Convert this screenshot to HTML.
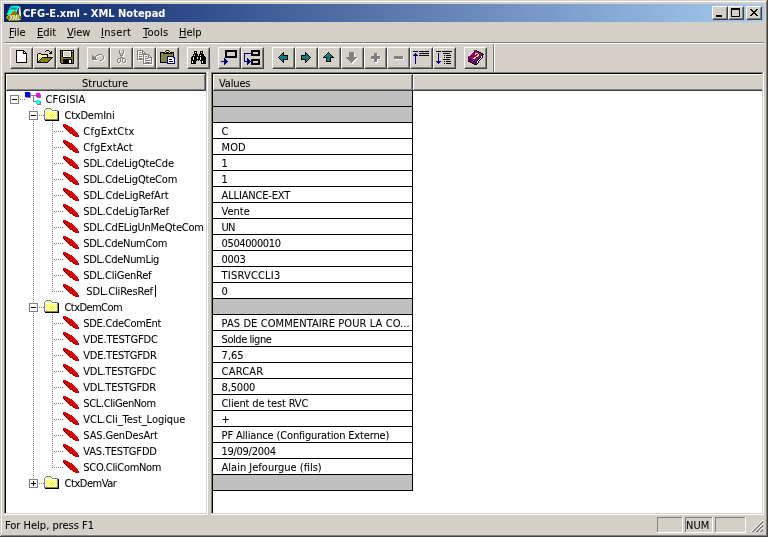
<!DOCTYPE html><html><head><meta charset="utf-8"><title>CFG-E.xml - XML Notepad</title><style>
html,body{margin:0;padding:0;background:#d4d0c8;}
body{width:768px;height:537px;overflow:hidden;position:relative;font-family:"DejaVu Sans Condensed","Liberation Sans",sans-serif;font-size:11px;color:#000;}
#win{will-change:transform;position:absolute;left:0;top:0;width:768px;height:537px;background:#d4d0c8;overflow:hidden;}
#win div,#win svg{position:absolute;}
.t{white-space:pre;line-height:16px;height:16px;-webkit-text-stroke:0.06px #000;}
.tb{white-space:pre;line-height:18px;height:18px;font-weight:bold;color:#fff;}
.btn{width:23px;height:22px;background:#d4d0c8;box-sizing:border-box;border:1px solid;border-color:#fff #404040 #404040 #fff;}
.btn:after{content:"";position:absolute;left:0;top:0;right:0;bottom:0;border:1px solid;border-color:#d4d0c8 #808080 #808080 #d4d0c8;}
u{text-decoration:underline;text-decoration-thickness:1px;text-underline-offset:1px;}
</style></head><body><div id="win">
<div style="left:0px;top:0px;width:768px;height:537px;background:#d4d0c8;"></div>
<div style="left:1px;top:1px;width:766px;height:1px;background:#ffffff;"></div>
<div style="left:1px;top:1px;width:1px;height:534px;background:#ffffff;"></div>
<div style="left:766px;top:1px;width:1px;height:535px;background:#808080;"></div>
<div style="left:1px;top:535px;width:766px;height:1px;background:#808080;"></div>
<div style="left:767px;top:0px;width:1px;height:537px;background:#404040;"></div>
<div style="left:0px;top:536px;width:768px;height:1px;background:#404040;"></div>
<div style="left:4px;top:4px;width:760px;height:18px;background:linear-gradient(to right,#0a246a,#a6caf0);"></div>
<div class="tb" style="left:23px;top:5px;">CFG-E.xml - XML Notepad</div>
<svg style="left:6px;top:5px" width="16" height="16" viewBox="0 0 16 16">
<polygon points="12.6,1.6 14.6,1.2 15.8,13 13,13" fill="#e8e8e8"/>
<polygon points="14.6,1.2 15.2,1.2 16,13.4 15.2,13.4" fill="#000"/>
<polygon points="4.6,0.6 14,0.6 9.6,10.6 0,10.6" fill="#00ffff"/>
<polygon points="4.6,0.6 14,0.6 9.6,10.6 0,10.6" fill="none" stroke="#000" stroke-width="1" stroke-dasharray="1 1"/>
<polygon points="5,2.6 11.6,2.6 10.6,4.4 4.4,4.4" fill="#008080"/>
<polygon points="8,5 16,12.6 12.4,16 3.8,16 0,12.6" fill="#808000"/>
<path d="M8 5.2 L0.4 12.6 L4 15.8" stroke="#ffff00" stroke-width="1" fill="none" stroke-dasharray="1.4 0.6"/>
<text x="3.6" y="14.9" font-family="Liberation Sans, sans-serif" font-weight="bold" font-size="7" fill="#fff" textLength="11" lengthAdjust="spacingAndGlyphs">XML</text>
</svg>
<div style="left:712px;top:6px;width:16px;height:14px;background:#d4d0c8;box-sizing:border-box;border:1px solid;border-color:#fff #404040 #404040 #fff;"><div style="left:0;top:0;right:0;bottom:0;border:1px solid;border-color:#d4d0c8 #808080 #808080 #d4d0c8;"></div></div>
<div style="left:728px;top:6px;width:16px;height:14px;background:#d4d0c8;box-sizing:border-box;border:1px solid;border-color:#fff #404040 #404040 #fff;"><div style="left:0;top:0;right:0;bottom:0;border:1px solid;border-color:#d4d0c8 #808080 #808080 #d4d0c8;"></div></div>
<div style="left:746px;top:6px;width:16px;height:14px;background:#d4d0c8;box-sizing:border-box;border:1px solid;border-color:#fff #404040 #404040 #fff;"><div style="left:0;top:0;right:0;bottom:0;border:1px solid;border-color:#d4d0c8 #808080 #808080 #d4d0c8;"></div></div>
<div style="left:716px;top:15px;width:6px;height:2px;background:#000000;"></div>
<div style="left:731px;top:8px;width:9px;height:9px;background:transparent;box-sizing:border-box;border:1px solid #000;border-top:2px solid #000;"></div>
<svg style="left:750px;top:9px" width="8" height="7" viewBox="0 0 8 7" shape-rendering="crispEdges"><path d="M0 0h2v1h1v1h2v-1h1v-1h2v1h-1v1h-1v1h-1v1h1v1h1v1h1v1h-2v-1h-1v-1h-2v1h-1v1h-2v-1h1v-1h1v-1h1v-1h-1v-1h-1v-1h-1z" fill="#000"/></svg>
<div class="t" style="left:9px;top:25px;"><u>F</u>ile</div>
<div class="t" style="left:37px;top:25px;"><u>E</u>dit</div>
<div class="t" style="left:67px;top:25px;"><u>V</u>iew</div>
<div class="t" style="left:101px;top:25px;letter-spacing:0.3px;"><u>I</u>nsert</div>
<div class="t" style="left:143px;top:25px;letter-spacing:0.25px;"><u>T</u>ools</div>
<div class="t" style="left:179px;top:25px;"><u>H</u>elp</div>
<div style="left:4px;top:42px;width:760px;height:1px;background:#808080;"></div>
<div style="left:4px;top:43px;width:760px;height:1px;background:#ffffff;"></div>
<div class="btn" style="left:10px;top:47px"></div>
<div class="btn" style="left:33px;top:47px"></div>
<div class="btn" style="left:56px;top:47px"></div>
<div class="btn" style="left:87px;top:47px"></div>
<div class="btn" style="left:110px;top:47px"></div>
<div class="btn" style="left:133px;top:47px"></div>
<div class="btn" style="left:156px;top:47px"></div>
<div class="btn" style="left:187px;top:47px"></div>
<div class="btn" style="left:218px;top:47px"></div>
<div class="btn" style="left:241px;top:47px"></div>
<div class="btn" style="left:272px;top:47px"></div>
<div class="btn" style="left:295px;top:47px"></div>
<div class="btn" style="left:318px;top:47px"></div>
<div class="btn" style="left:341px;top:47px"></div>
<div class="btn" style="left:364px;top:47px"></div>
<div class="btn" style="left:387px;top:47px"></div>
<div class="btn" style="left:410px;top:47px"></div>
<div class="btn" style="left:433px;top:47px"></div>
<div class="btn" style="left:464px;top:47px"></div>
<div style="left:493px;top:44px;width:1px;height:28px;background:#808080;"></div>
<div style="left:494px;top:44px;width:1px;height:28px;background:#ffffff;"></div>
<svg style="left:16px;top:50px" width="11" height="13" viewBox="0 0 11 13" shape-rendering="crispEdges"><path fill="#000000" d="M0 0h8v1h-8zM0 1h1v1h-1zM7 1h2v1h-2zM0 2h1v1h-1zM7 2h1v1h-1zM9 2h1v1h-1zM0 3h1v1h-1zM7 3h4v1h-4zM0 4h1v1h-1zM10 4h1v1h-1zM0 5h1v1h-1zM10 5h1v1h-1zM0 6h1v1h-1zM10 6h1v1h-1zM0 7h1v1h-1zM10 7h1v1h-1zM0 8h1v1h-1zM10 8h1v1h-1zM0 9h1v1h-1zM10 9h1v1h-1zM0 10h1v1h-1zM10 10h1v1h-1zM0 11h1v1h-1zM10 11h1v1h-1zM0 12h11v1h-11z"/><path fill="#ffffff" d="M1 1h6v1h-6zM1 2h6v1h-6zM8 2h1v1h-1zM1 3h6v1h-6zM1 4h9v1h-9zM1 5h9v1h-9zM1 6h9v1h-9zM1 7h9v1h-9zM1 8h9v1h-9zM1 9h9v1h-9zM1 10h9v1h-9zM1 11h9v1h-9z"/></svg>
<svg style="left:37px;top:50px" width="16" height="13" viewBox="0 0 16 13" shape-rendering="crispEdges"><path fill="#000000" d="M9 0h3v1h-3zM8 1h1v1h-1zM12 1h1v1h-1zM14 1h1v1h-1zM13 2h2v1h-2zM1 3h3v1h-3zM12 3h3v1h-3zM0 4h1v1h-1zM4 4h7v1h-7zM0 5h1v1h-1zM10 5h1v1h-1zM0 6h1v1h-1zM10 6h1v1h-1zM0 7h1v1h-1zM5 7h11v1h-11zM0 8h1v1h-1zM4 8h1v1h-1zM14 8h1v1h-1zM0 9h1v1h-1zM3 9h1v1h-1zM13 9h1v1h-1zM0 10h1v1h-1zM2 10h1v1h-1zM12 10h1v1h-1zM0 11h2v1h-2zM11 11h1v1h-1zM0 12h11v1h-11z"/><path fill="#ffffff" d="M1 4h1v1h-1zM3 4h1v1h-1zM2 5h1v1h-1zM4 5h1v1h-1zM6 5h1v1h-1zM8 5h1v1h-1zM1 6h1v1h-1zM3 6h1v1h-1zM5 6h1v1h-1zM7 6h1v1h-1zM9 6h1v1h-1zM2 7h1v1h-1zM4 7h1v1h-1zM1 8h1v1h-1zM3 8h1v1h-1zM2 9h1v1h-1zM1 10h1v1h-1z"/><path fill="#ffff00" d="M2 4h1v1h-1zM1 5h1v1h-1zM3 5h1v1h-1zM5 5h1v1h-1zM7 5h1v1h-1zM9 5h1v1h-1zM2 6h1v1h-1zM4 6h1v1h-1zM6 6h1v1h-1zM8 6h1v1h-1zM1 7h1v1h-1zM3 7h1v1h-1zM2 8h1v1h-1zM1 9h1v1h-1z"/><path fill="#808000" d="M5 8h9v1h-9zM4 9h9v1h-9zM3 10h9v1h-9zM2 11h9v1h-9z"/></svg>
<svg style="left:60px;top:50px" width="14" height="14" viewBox="0 0 14 14" shape-rendering="crispEdges"><path fill="#000000" d="M0 0h14v1h-14zM0 1h1v1h-1zM2 1h1v1h-1zM11 1h1v1h-1zM13 1h1v1h-1zM0 2h1v1h-1zM2 2h1v1h-1zM11 2h3v1h-3zM0 3h1v1h-1zM2 3h1v1h-1zM11 3h1v1h-1zM13 3h1v1h-1zM0 4h1v1h-1zM2 4h1v1h-1zM11 4h1v1h-1zM13 4h1v1h-1zM0 5h1v1h-1zM2 5h1v1h-1zM11 5h1v1h-1zM13 5h1v1h-1zM0 6h1v1h-1zM2 6h1v1h-1zM11 6h1v1h-1zM13 6h1v1h-1zM0 7h1v1h-1zM3 7h8v1h-8zM13 7h1v1h-1zM0 8h1v1h-1zM13 8h1v1h-1zM0 9h1v1h-1zM3 9h9v1h-9zM13 9h1v1h-1zM0 10h1v1h-1zM3 10h6v1h-6zM11 10h1v1h-1zM13 10h1v1h-1zM0 11h1v1h-1zM3 11h6v1h-6zM11 11h1v1h-1zM13 11h1v1h-1zM0 12h1v1h-1zM3 12h6v1h-6zM11 12h1v1h-1zM13 12h1v1h-1zM1 13h13v1h-13z"/><path fill="#808000" d="M1 1h1v1h-1zM1 2h1v1h-1zM1 3h1v1h-1zM12 3h1v1h-1zM1 4h1v1h-1zM12 4h1v1h-1zM1 5h1v1h-1zM12 5h1v1h-1zM1 6h1v1h-1zM12 6h1v1h-1zM1 7h2v1h-2zM11 7h2v1h-2zM1 8h12v1h-12zM1 9h2v1h-2zM12 9h1v1h-1zM1 10h2v1h-2zM12 10h1v1h-1zM1 11h2v1h-2zM12 11h1v1h-1zM1 12h2v1h-2zM12 12h1v1h-1z"/><path fill="#ffffff" d="M3 1h8v1h-8zM12 1h1v1h-1zM3 2h1v1h-1zM10 2h1v1h-1zM3 3h1v1h-1zM10 3h1v1h-1zM3 4h1v1h-1zM10 4h1v1h-1zM3 5h1v1h-1zM10 5h1v1h-1zM3 6h8v1h-8zM9 10h2v1h-2zM9 11h2v1h-2zM9 12h2v1h-2z"/><path fill="#d4d0c8" d="M4 2h6v1h-6zM4 3h6v1h-6zM4 4h6v1h-6zM4 5h6v1h-6z"/></svg>
<svg style="left:92px;top:54px" width="17" height="8" viewBox="0 0 17 8" shape-rendering="crispEdges"><path fill="#808080" d="M6 0h4v1h-4zM0 1h1v1h-1zM4 1h2v1h-2zM10 1h1v1h-1zM0 2h2v1h-2zM3 2h1v1h-1zM11 2h1v1h-1zM0 3h4v1h-4zM11 3h1v1h-1zM0 4h4v1h-4zM11 4h1v1h-1zM0 5h5v1h-5zM10 5h1v1h-1zM8 6h2v1h-2z"/><path fill="#ffffff" d="M7 1h3v1h-3zM5 2h2v1h-2zM4 3h1v1h-1zM12 3h1v1h-1zM4 4h1v1h-1zM12 4h1v1h-1zM12 5h1v1h-1zM1 6h5v1h-5zM11 6h1v1h-1zM9 7h2v1h-2z"/></svg>
<svg style="left:117px;top:50px" width="11" height="14" viewBox="0 0 11 14" shape-rendering="crispEdges"><path fill="#808080" d="M2 0h1v1h-1zM6 0h1v1h-1zM2 1h1v1h-1zM6 1h1v1h-1zM2 2h1v1h-1zM6 2h1v1h-1zM2 3h2v1h-2zM5 3h2v1h-2zM3 4h1v1h-1zM5 4h1v1h-1zM3 5h3v1h-3zM4 6h1v1h-1zM3 7h3v1h-3zM1 8h3v1h-3zM5 8h3v1h-3zM0 9h1v1h-1zM3 9h1v1h-1zM5 9h1v1h-1zM8 9h1v1h-1zM0 10h1v1h-1zM3 10h1v1h-1zM5 10h1v1h-1zM8 10h1v1h-1zM0 11h1v1h-1zM3 11h1v1h-1zM5 11h1v1h-1zM8 11h1v1h-1zM1 12h2v1h-2zM6 12h2v1h-2z"/><path fill="#ffffff" d="M3 1h1v1h-1zM7 1h1v1h-1zM3 2h1v1h-1zM7 2h1v1h-1zM7 3h1v1h-1zM4 4h1v1h-1zM6 4h2v1h-2zM6 5h1v1h-1zM5 6h2v1h-2zM4 8h1v1h-1zM2 9h1v1h-1zM4 9h1v1h-1zM6 9h2v1h-2zM1 10h1v1h-1zM4 10h1v1h-1zM6 10h1v1h-1zM9 10h1v1h-1zM1 11h1v1h-1zM4 11h1v1h-1zM6 11h1v1h-1zM9 11h1v1h-1zM4 12h1v1h-1zM9 12h1v1h-1zM2 13h2v1h-2zM7 13h2v1h-2z"/></svg>
<svg style="left:137px;top:50px" width="17" height="15" viewBox="0 0 17 15" shape-rendering="crispEdges"><path fill="#808080" d="M0 0h6v1h-6zM0 1h1v1h-1zM5 1h2v1h-2zM0 2h1v1h-1zM2 2h2v1h-2zM5 2h1v1h-1zM7 2h1v1h-1zM0 3h1v1h-1zM5 3h4v1h-4zM0 4h1v1h-1zM2 4h3v1h-3zM6 4h6v1h-6zM0 5h1v1h-1zM6 5h1v1h-1zM11 5h2v1h-2zM0 6h1v1h-1zM2 6h3v1h-3zM6 6h1v1h-1zM8 6h2v1h-2zM11 6h1v1h-1zM13 6h1v1h-1zM0 7h1v1h-1zM6 7h1v1h-1zM11 7h4v1h-4zM0 8h1v1h-1zM2 8h3v1h-3zM6 8h1v1h-1zM8 8h3v1h-3zM14 8h1v1h-1zM0 9h7v1h-7zM14 9h1v1h-1zM6 10h1v1h-1zM8 10h5v1h-5zM14 10h1v1h-1zM6 11h1v1h-1zM14 11h1v1h-1zM6 12h1v1h-1zM8 12h5v1h-5zM14 12h1v1h-1zM6 13h9v1h-9z"/><path fill="#ffffff" d="M1 1h4v1h-4zM1 2h1v1h-1zM6 2h1v1h-1zM1 3h1v1h-1zM3 3h2v1h-2zM1 4h1v1h-1zM1 5h1v1h-1zM3 5h3v1h-3zM7 5h4v1h-4zM1 6h1v1h-1zM7 6h1v1h-1zM12 6h1v1h-1zM1 7h1v1h-1zM3 7h3v1h-3zM7 7h1v1h-1zM9 7h2v1h-2zM1 8h1v1h-1zM7 8h1v1h-1zM12 8h2v1h-2zM15 8h1v1h-1zM7 9h1v1h-1zM9 9h3v1h-3zM15 9h1v1h-1zM1 10h5v1h-5zM7 10h1v1h-1zM15 10h1v1h-1zM7 11h1v1h-1zM9 11h5v1h-5zM15 11h1v1h-1zM7 12h1v1h-1zM15 12h1v1h-1zM15 13h1v1h-1zM7 14h9v1h-9z"/></svg>
<svg style="left:160px;top:50px" width="15" height="14" viewBox="0 0 15 14" shape-rendering="crispEdges"><path fill="#000000" d="M6 0h3v1h-3zM5 1h1v1h-1zM9 1h1v1h-1zM0 2h5v1h-5zM6 2h3v1h-3zM10 2h4v1h-4zM0 3h1v1h-1zM3 3h9v1h-9zM13 3h1v1h-1zM0 4h1v1h-1zM13 4h1v1h-1zM0 5h1v1h-1zM13 5h1v1h-1zM0 6h1v1h-1zM0 7h1v1h-1zM0 8h1v1h-1zM0 9h1v1h-1zM0 10h1v1h-1zM0 11h1v1h-1zM0 12h7v1h-7z"/><path fill="#ffff00" d="M6 1h3v1h-3zM5 2h1v1h-1zM9 2h1v1h-1z"/><path fill="#848444" d="M1 3h2v1h-2zM12 3h1v1h-1zM1 4h12v1h-12zM1 5h12v1h-12zM1 6h6v1h-6zM1 7h6v1h-6zM1 8h6v1h-6zM1 9h6v1h-6zM1 10h6v1h-6zM1 11h6v1h-6z"/><path fill="#000080" d="M7 6h7v1h-7zM7 7h1v1h-1zM13 7h2v1h-2zM7 8h1v1h-1zM14 8h1v1h-1zM7 9h1v1h-1zM9 9h3v1h-3zM14 9h1v1h-1zM7 10h1v1h-1zM14 10h1v1h-1zM7 11h1v1h-1zM9 11h4v1h-4zM14 11h1v1h-1zM7 12h1v1h-1zM14 12h1v1h-1zM7 13h8v1h-8z"/><path fill="#ffffff" d="M8 7h5v1h-5zM8 8h6v1h-6zM8 9h1v1h-1zM12 9h2v1h-2zM8 10h6v1h-6zM8 11h1v1h-1zM13 11h1v1h-1zM8 12h6v1h-6z"/></svg>
<svg style="left:191px;top:51px" width="15" height="13" viewBox="0 0 15 13" shape-rendering="crispEdges"><path fill="#000000" d="M3 0h3v1h-3zM9 0h3v1h-3zM3 1h1v1h-1zM5 1h1v1h-1zM9 1h1v1h-1zM11 1h1v1h-1zM3 2h3v1h-3zM9 2h3v1h-3zM2 3h5v1h-5zM8 3h5v1h-5zM2 4h1v1h-1zM4 4h3v1h-3zM8 4h1v1h-1zM10 4h3v1h-3zM1 5h13v1h-13zM0 6h2v1h-2zM3 6h3v1h-3zM7 6h2v1h-2zM10 6h5v1h-5zM0 7h2v1h-2zM3 7h3v1h-3zM7 7h2v1h-2zM10 7h5v1h-5zM0 8h2v1h-2zM3 8h6v1h-6zM10 8h5v1h-5zM0 9h6v1h-6zM7 9h1v1h-1zM9 9h6v1h-6zM0 10h1v1h-1zM2 10h3v1h-3zM10 10h1v1h-1zM12 10h3v1h-3zM0 11h1v1h-1zM2 11h3v1h-3zM10 11h1v1h-1zM12 11h3v1h-3zM0 12h5v1h-5zM10 12h5v1h-5z"/><path fill="#ffffff" d="M4 1h1v1h-1zM10 1h1v1h-1zM3 4h1v1h-1zM9 4h1v1h-1zM2 6h1v1h-1zM6 6h1v1h-1zM9 6h1v1h-1zM2 7h1v1h-1zM6 7h1v1h-1zM9 7h1v1h-1zM2 8h1v1h-1zM9 8h1v1h-1zM1 10h1v1h-1zM11 10h1v1h-1zM1 11h1v1h-1zM11 11h1v1h-1z"/></svg>
<svg style="left:221px;top:50px" width="16" height="15" viewBox="0 0 16 15" shape-rendering="crispEdges"><path fill="#000000" d="M4 0h12v1h-12zM4 1h12v1h-12zM4 2h2v1h-2zM14 2h2v1h-2zM4 3h2v1h-2zM14 3h2v1h-2zM4 4h2v1h-2zM14 4h2v1h-2zM4 5h2v1h-2zM14 5h2v1h-2zM4 6h12v1h-12zM4 7h12v1h-12z"/><path fill="#000080" d="M3 8h1v1h-1zM3 9h2v1h-2zM3 10h3v1h-3zM0 11h7v1h-7zM3 12h3v1h-3zM3 13h2v1h-2zM3 14h1v1h-1z"/></svg>
<svg style="left:244px;top:50px" width="16" height="15" viewBox="0 0 16 15" shape-rendering="crispEdges"><path fill="#000000" d="M7 0h9v1h-9zM7 1h9v1h-9zM7 2h2v1h-2zM14 2h2v1h-2zM7 3h2v1h-2zM14 3h2v1h-2zM7 4h9v1h-9zM7 5h9v1h-9zM7 9h9v1h-9zM7 10h9v1h-9zM7 11h2v1h-2zM14 11h2v1h-2zM7 12h2v1h-2zM14 12h2v1h-2zM7 13h9v1h-9zM7 14h9v1h-9z"/><path fill="#000080" d="M0 3h7v1h-7zM0 4h1v1h-1zM0 5h1v1h-1zM0 6h1v1h-1zM0 7h1v1h-1zM0 8h1v1h-1zM3 8h1v1h-1zM0 9h1v1h-1zM3 9h2v1h-2zM0 10h1v1h-1zM3 10h3v1h-3zM0 11h7v1h-7zM3 12h3v1h-3zM3 13h2v1h-2zM3 14h1v1h-1z"/></svg>
<svg style="left:278px;top:52px" width="10" height="11" viewBox="0 0 10 11" shape-rendering="crispEdges"><path fill="#000000" d="M5 0h1v1h-1zM4 1h2v1h-2zM3 2h1v1h-1zM5 2h1v1h-1zM2 3h1v1h-1zM5 3h5v1h-5zM1 4h1v1h-1zM9 4h1v1h-1zM0 5h1v1h-1zM9 5h1v1h-1zM1 6h1v1h-1zM9 6h1v1h-1zM2 7h1v1h-1zM5 7h5v1h-5zM3 8h1v1h-1zM5 8h1v1h-1zM4 9h2v1h-2zM5 10h1v1h-1z"/><path fill="#008080" d="M4 2h1v1h-1zM3 3h2v1h-2zM2 4h7v1h-7zM1 5h8v1h-8zM2 6h7v1h-7zM3 7h2v1h-2zM4 8h1v1h-1z"/></svg>
<svg style="left:301px;top:52px" width="10" height="11" viewBox="0 0 10 11" shape-rendering="crispEdges"><path fill="#000000" d="M4 0h1v1h-1zM4 1h2v1h-2zM4 2h1v1h-1zM6 2h1v1h-1zM0 3h5v1h-5zM7 3h1v1h-1zM0 4h1v1h-1zM8 4h1v1h-1zM0 5h1v1h-1zM9 5h1v1h-1zM0 6h1v1h-1zM8 6h1v1h-1zM0 7h5v1h-5zM7 7h1v1h-1zM4 8h1v1h-1zM6 8h1v1h-1zM4 9h2v1h-2zM4 10h1v1h-1z"/><path fill="#008080" d="M5 2h1v1h-1zM5 3h2v1h-2zM1 4h7v1h-7zM1 5h8v1h-8zM1 6h7v1h-7zM5 7h2v1h-2zM5 8h1v1h-1z"/></svg>
<svg style="left:323px;top:52px" width="11" height="10" viewBox="0 0 11 10" shape-rendering="crispEdges"><path fill="#000000" d="M5 0h1v1h-1zM4 1h1v1h-1zM6 1h1v1h-1zM3 2h1v1h-1zM7 2h1v1h-1zM2 3h1v1h-1zM8 3h1v1h-1zM1 4h1v1h-1zM9 4h1v1h-1zM0 5h4v1h-4zM7 5h4v1h-4zM3 6h1v1h-1zM7 6h1v1h-1zM3 7h1v1h-1zM7 7h1v1h-1zM3 8h1v1h-1zM7 8h1v1h-1zM3 9h5v1h-5z"/><path fill="#008080" d="M5 1h1v1h-1zM4 2h3v1h-3zM3 3h5v1h-5zM2 4h7v1h-7zM4 5h3v1h-3zM4 6h3v1h-3zM4 7h3v1h-3zM4 8h3v1h-3z"/></svg>
<svg style="left:346px;top:52px" width="13" height="12" viewBox="0 0 13 12" shape-rendering="crispEdges"><path fill="#808080" d="M3 0h5v1h-5zM3 1h5v1h-5zM3 2h5v1h-5zM3 3h5v1h-5zM3 4h5v1h-5zM0 5h11v1h-11zM1 6h9v1h-9zM2 7h7v1h-7zM3 8h5v1h-5zM4 9h3v1h-3zM5 10h1v1h-1z"/><path fill="#ffffff" d="M8 1h1v1h-1zM8 2h1v1h-1zM8 3h1v1h-1zM8 4h1v1h-1zM10 6h2v1h-2zM9 7h2v1h-2zM8 8h2v1h-2zM7 9h2v1h-2zM6 10h2v1h-2zM6 11h1v1h-1z"/></svg>
<svg style="left:371px;top:53px" width="11" height="10" viewBox="0 0 11 10" shape-rendering="crispEdges"><path fill="#808080" d="M3 0h3v1h-3zM3 1h3v1h-3zM3 2h3v1h-3zM0 3h9v1h-9zM0 4h9v1h-9zM0 5h9v1h-9zM3 6h3v1h-3zM3 7h3v1h-3zM3 8h3v1h-3z"/><path fill="#ffffff" d="M6 1h1v1h-1zM6 2h1v1h-1zM9 4h1v1h-1zM9 5h1v1h-1zM1 6h2v1h-2zM6 6h4v1h-4zM6 7h1v1h-1zM6 8h1v1h-1zM4 9h3v1h-3z"/></svg>
<svg style="left:394px;top:56px" width="11" height="4" viewBox="0 0 11 4" shape-rendering="crispEdges"><path fill="#808080" d="M0 0h9v1h-9zM0 1h9v1h-9zM0 2h9v1h-9z"/><path fill="#ffffff" d="M9 1h1v1h-1zM9 2h1v1h-1zM1 3h9v1h-9z"/></svg>
<svg style="left:413px;top:51px" width="16" height="13" viewBox="0 0 16 13" shape-rendering="crispEdges"><path fill="#000000" d="M0 0h5v1h-5zM6 0h10v1h-10zM6 2h10v1h-10zM6 4h10v1h-10z"/><path fill="#000080" d="M2 2h1v1h-1zM1 3h3v1h-3zM0 4h5v1h-5zM2 5h1v1h-1zM2 6h1v1h-1zM2 7h1v1h-1zM2 8h1v1h-1zM2 9h1v1h-1zM2 10h1v1h-1zM2 11h1v1h-1zM2 12h1v1h-1z"/></svg>
<svg style="left:436px;top:51px" width="16" height="13" viewBox="0 0 16 13" shape-rendering="crispEdges"><path fill="#000000" d="M0 0h5v1h-5zM6 0h10v1h-10zM7 2h7v1h-7zM8 4h1v1h-1zM10 4h5v1h-5zM8 6h1v1h-1zM10 6h5v1h-5zM7 8h7v1h-7zM8 10h1v1h-1zM10 10h5v1h-5zM8 12h1v1h-1zM10 12h5v1h-5z"/><path fill="#000080" d="M2 2h1v1h-1zM2 3h1v1h-1zM2 4h1v1h-1zM2 5h1v1h-1zM2 6h1v1h-1zM2 7h1v1h-1zM2 8h1v1h-1zM2 9h1v1h-1zM0 10h5v1h-5zM1 11h3v1h-3zM2 12h1v1h-1z"/></svg>
<svg style="left:468px;top:50px" width="16" height="15" viewBox="0 0 16 15" shape-rendering="crispEdges"><path fill="#880088" d="M6 0h2v1h-2zM6 1h3v1h-3zM5 2h6v1h-6zM4 3h3v1h-3zM10 3h3v1h-3zM3 4h4v1h-4zM8 4h2v1h-2zM11 4h3v1h-3zM2 5h7v1h-7zM11 5h3v1h-3zM0 6h8v1h-8zM10 6h3v1h-3zM1 7h5v1h-5zM8 7h4v1h-4zM1 8h4v1h-4zM7 8h4v1h-4zM0 9h1v1h-1zM3 9h7v1h-7zM0 10h3v1h-3zM5 10h4v1h-4zM2 11h3v1h-3zM7 11h1v1h-1zM4 12h3v1h-3zM6 13h3v1h-3z"/><path fill="#000000" d="M8 0h1v1h-1zM9 1h2v1h-2zM11 2h2v1h-2zM13 3h2v1h-2zM14 4h2v1h-2zM14 5h1v1h-1zM14 6h1v1h-1zM0 7h1v1h-1zM12 7h1v1h-1zM14 7h1v1h-1zM0 8h1v1h-1zM11 8h1v1h-1zM13 8h1v1h-1zM1 9h2v1h-2zM10 9h1v1h-1zM12 9h1v1h-1zM3 10h2v1h-2zM9 10h1v1h-1zM11 10h1v1h-1zM0 11h2v1h-2zM5 11h2v1h-2zM8 11h1v1h-1zM10 11h1v1h-1zM2 12h2v1h-2zM7 12h2v1h-2zM10 12h1v1h-1zM4 13h2v1h-2zM9 13h1v1h-1zM6 14h3v1h-3z"/><path fill="#ffffff" d="M5 1h1v1h-1zM4 2h1v1h-1zM3 3h1v1h-1zM2 4h1v1h-1zM1 5h1v1h-1zM13 6h1v1h-1zM13 7h1v1h-1zM12 8h1v1h-1zM11 9h1v1h-1zM10 10h1v1h-1zM9 11h1v1h-1zM9 12h1v1h-1z"/><path fill="#ffff00" d="M7 3h3v1h-3zM7 4h1v1h-1zM10 4h1v1h-1zM9 5h2v1h-2zM8 6h2v1h-2zM6 7h2v1h-2zM5 8h2v1h-2z"/></svg>
<div style="left:4px;top:72px;width:204px;height:443px;background:#ffffff;"></div>
<div style="left:4px;top:72px;width:203px;height:442px;background:#d4d0c8;"></div>
<div style="left:4px;top:72px;width:202px;height:441px;background:#808080;"></div>
<div style="left:5px;top:73px;width:201px;height:440px;background:#000000;"></div>
<div style="left:6px;top:74px;width:200px;height:439px;background:#ffffff;"></div>
<div style="left:6px;top:74px;width:200px;height:17px;background:#404040;"></div>
<div style="left:6px;top:74px;width:199px;height:16px;background:#ffffff;"></div>
<div style="left:7px;top:75px;width:198px;height:15px;background:#808080;"></div>
<div style="left:7px;top:75px;width:197px;height:14px;background:#d4d0c8;"></div>
<div class="t" style="left:5px;top:76px;width:200px;text-align:center;">Structure</div>
<div style="left:211px;top:72px;width:553px;height:443px;background:#ffffff;"></div>
<div style="left:211px;top:72px;width:552px;height:442px;background:#d4d0c8;"></div>
<div style="left:211px;top:72px;width:551px;height:441px;background:#808080;"></div>
<div style="left:212px;top:73px;width:550px;height:440px;background:#000000;"></div>
<div style="left:213px;top:74px;width:549px;height:439px;background:#ffffff;"></div>
<div style="left:213px;top:74px;width:200px;height:17px;background:#404040;"></div>
<div style="left:213px;top:74px;width:199px;height:16px;background:#ffffff;"></div>
<div style="left:214px;top:75px;width:198px;height:15px;background:#808080;"></div>
<div style="left:214px;top:75px;width:197px;height:14px;background:#d4d0c8;"></div>
<div style="left:413px;top:74px;width:352px;height:17px;background:#404040;"></div>
<div style="left:413px;top:74px;width:351px;height:16px;background:#ffffff;"></div>
<div style="left:414px;top:75px;width:350px;height:15px;background:#808080;"></div>
<div style="left:414px;top:75px;width:349px;height:14px;background:#d4d0c8;"></div>
<div style="left:762px;top:72px;width:1px;height:1px;background:#808080;"></div>
<div style="left:762px;top:73px;width:1px;height:441px;background:#d4d0c8;"></div>
<div style="left:763px;top:72px;width:1px;height:443px;background:#ffffff;"></div>
<div style="left:764px;top:72px;width:2px;height:20px;background:#d4d0c8;"></div>
<div class="t" style="left:219px;top:76px;letter-spacing:-0.15px;">Values</div>
<div style="left:10px;top:95px;width:9px;height:9px;background:#ffffff;box-sizing:border-box;border:1px solid #808080;"></div>
<div style="left:12px;top:99px;width:5px;height:1px;background:#000000;"></div>
<div style="left:20px;top:99px;width:5px;height:1px;background:repeating-linear-gradient(to right,#808080 0,#808080 1px,transparent 1px,transparent 2px);"></div>
<svg style="left:25px;top:92px" width="17" height="14" viewBox="0 0 17 14" shape-rendering="crispEdges"><path d="M5 3h6v1h-6zM8 4h1v6h-1zM9 9h2v1h-2z" fill="#808080"/><path d="M1 5h5v1h-5zM5 1h1v4h-1zM12 5h4v1h-4zM15 2h1v3h-1zM12 12h4v1h-4zM15 9h1v3h-1z" fill="#8a8478"/><rect x="0" y="0" width="5" height="5" fill="#0000ff"/><rect x="11" y="1" width="4" height="4" fill="#ff00ff"/><rect x="11" y="8" width="4" height="4" fill="#00ffff"/></svg>
<div class="t" style="left:45.5px;top:92px;letter-spacing:0.12px;">CFGISIA</div>
<div style="left:29px;top:111px;width:9px;height:9px;background:#ffffff;box-sizing:border-box;border:1px solid #808080;"></div>
<div style="left:31px;top:115px;width:5px;height:1px;background:#000000;"></div>
<div style="left:39px;top:115px;width:5px;height:1px;background:repeating-linear-gradient(to right,#808080 0,#808080 1px,transparent 1px,transparent 2px);"></div>
<svg style="left:44px;top:108px" width="15" height="13" viewBox="0 0 15 13" shape-rendering="crispEdges"><path fill="#808080" d="M2 0h5v1h-5zM1 1h1v1h-1zM7 1h1v1h-1zM0 2h1v1h-1zM8 2h6v1h-6zM0 3h1v1h-1zM13 3h1v1h-1zM0 4h1v1h-1zM13 4h1v1h-1zM0 5h1v1h-1zM13 5h1v1h-1zM0 6h1v1h-1zM13 6h1v1h-1zM0 7h1v1h-1zM13 7h1v1h-1zM0 8h1v1h-1zM13 8h1v1h-1zM0 9h1v1h-1zM13 9h1v1h-1zM0 10h1v1h-1zM13 10h1v1h-1zM0 11h14v1h-14z"/><path fill="#ffff00" d="M2 1h1v1h-1zM4 1h1v1h-1zM6 1h1v1h-1zM3 2h1v1h-1zM5 2h1v1h-1zM2 4h1v1h-1zM4 4h1v1h-1zM6 4h1v1h-1zM8 4h1v1h-1zM10 4h1v1h-1zM12 4h1v1h-1zM3 5h1v1h-1zM5 5h1v1h-1zM7 5h1v1h-1zM9 5h1v1h-1zM11 5h1v1h-1zM2 6h1v1h-1zM4 6h1v1h-1zM6 6h1v1h-1zM8 6h1v1h-1zM10 6h1v1h-1zM12 6h1v1h-1zM3 7h1v1h-1zM5 7h1v1h-1zM7 7h1v1h-1zM9 7h1v1h-1zM11 7h1v1h-1zM2 8h1v1h-1zM4 8h1v1h-1zM6 8h1v1h-1zM8 8h1v1h-1zM10 8h1v1h-1zM12 8h1v1h-1zM3 9h1v1h-1zM5 9h1v1h-1zM7 9h1v1h-1zM9 9h1v1h-1zM11 9h1v1h-1zM2 10h1v1h-1zM4 10h1v1h-1zM6 10h1v1h-1zM8 10h1v1h-1zM10 10h1v1h-1zM12 10h1v1h-1z"/><path fill="#ffffff" d="M3 1h1v1h-1zM5 1h1v1h-1zM1 2h2v1h-2zM4 2h1v1h-1zM6 2h2v1h-2zM1 3h12v1h-12zM1 4h1v1h-1zM3 4h1v1h-1zM5 4h1v1h-1zM7 4h1v1h-1zM9 4h1v1h-1zM11 4h1v1h-1zM1 5h2v1h-2zM4 5h1v1h-1zM6 5h1v1h-1zM8 5h1v1h-1zM10 5h1v1h-1zM12 5h1v1h-1zM1 6h1v1h-1zM3 6h1v1h-1zM5 6h1v1h-1zM7 6h1v1h-1zM9 6h1v1h-1zM11 6h1v1h-1zM1 7h2v1h-2zM4 7h1v1h-1zM6 7h1v1h-1zM8 7h1v1h-1zM10 7h1v1h-1zM12 7h1v1h-1zM1 8h1v1h-1zM3 8h1v1h-1zM5 8h1v1h-1zM7 8h1v1h-1zM9 8h1v1h-1zM11 8h1v1h-1zM1 9h2v1h-2zM4 9h1v1h-1zM6 9h1v1h-1zM8 9h1v1h-1zM10 9h1v1h-1zM12 9h1v1h-1zM1 10h1v1h-1zM3 10h1v1h-1zM5 10h1v1h-1zM7 10h1v1h-1zM9 10h1v1h-1zM11 10h1v1h-1z"/><path fill="#000000" d="M14 3h1v1h-1zM14 4h1v1h-1zM14 5h1v1h-1zM14 6h1v1h-1zM14 7h1v1h-1zM14 8h1v1h-1zM14 9h1v1h-1zM14 10h1v1h-1zM14 11h1v1h-1zM1 12h14v1h-14z"/></svg>
<div class="t" style="left:64.5px;top:108px;letter-spacing:-0.224px;">CtxDemIni</div>
<div style="left:54px;top:131px;width:9px;height:1px;background:repeating-linear-gradient(to right,#808080 0,#808080 1px,transparent 1px,transparent 2px);"></div>
<svg style="left:63px;top:124px" width="16" height="13" viewBox="0 0 16 13" shape-rendering="crispEdges"><path fill="#ff0000" d="M0 0h3v1h-3zM0 1h5v1h-5zM0 2h7v1h-7zM1 3h8v1h-8zM2 4h8v1h-8zM3 5h8v1h-8zM4 6h8v1h-8zM5 7h8v1h-8zM6 8h8v1h-8zM7 9h8v1h-8zM9 10h6v1h-6zM10 11h6v1h-6zM12 12h4v1h-4z"/><path fill="#800000" d="M2 0h1v1h-1zM0 1h1v1h-1zM3 1h1v1h-1zM1 2h1v1h-1zM4 2h1v1h-1zM1 3h1v1h-1zM4 3h1v1h-1zM6 3h1v1h-1zM3 4h1v1h-1zM6 4h1v1h-1zM3 5h1v1h-1zM6 5h1v1h-1zM8 5h1v1h-1zM5 6h1v1h-1zM7 6h1v1h-1zM9 6h1v1h-1zM5 7h1v1h-1zM9 7h1v1h-1zM7 8h1v1h-1zM9 8h1v1h-1zM11 8h1v1h-1zM8 9h1v1h-1zM11 9h1v1h-1zM10 10h1v1h-1zM12 10h1v1h-1zM11 11h1v1h-1zM13 11h1v1h-1zM15 11h1v1h-1zM13 12h1v1h-1zM15 12h1v1h-1z"/></svg>
<div class="t" style="left:83.3px;top:124px;letter-spacing:0.226px;">CfgExtCtx</div>
<div style="left:54px;top:147px;width:9px;height:1px;background:repeating-linear-gradient(to right,#808080 0,#808080 1px,transparent 1px,transparent 2px);"></div>
<svg style="left:63px;top:140px" width="16" height="13" viewBox="0 0 16 13" shape-rendering="crispEdges"><path fill="#ff0000" d="M0 0h3v1h-3zM0 1h5v1h-5zM0 2h7v1h-7zM1 3h8v1h-8zM2 4h8v1h-8zM3 5h8v1h-8zM4 6h8v1h-8zM5 7h8v1h-8zM6 8h8v1h-8zM7 9h8v1h-8zM9 10h6v1h-6zM10 11h6v1h-6zM12 12h4v1h-4z"/><path fill="#800000" d="M2 0h1v1h-1zM0 1h1v1h-1zM3 1h1v1h-1zM1 2h1v1h-1zM4 2h1v1h-1zM1 3h1v1h-1zM4 3h1v1h-1zM6 3h1v1h-1zM3 4h1v1h-1zM6 4h1v1h-1zM3 5h1v1h-1zM6 5h1v1h-1zM8 5h1v1h-1zM5 6h1v1h-1zM7 6h1v1h-1zM9 6h1v1h-1zM5 7h1v1h-1zM9 7h1v1h-1zM7 8h1v1h-1zM9 8h1v1h-1zM11 8h1v1h-1zM8 9h1v1h-1zM11 9h1v1h-1zM10 10h1v1h-1zM12 10h1v1h-1zM11 11h1v1h-1zM13 11h1v1h-1zM15 11h1v1h-1zM13 12h1v1h-1zM15 12h1v1h-1z"/></svg>
<div class="t" style="left:83.3px;top:140px;letter-spacing:0.112px;">CfgExtAct</div>
<div style="left:54px;top:163px;width:9px;height:1px;background:repeating-linear-gradient(to right,#808080 0,#808080 1px,transparent 1px,transparent 2px);"></div>
<svg style="left:63px;top:156px" width="16" height="13" viewBox="0 0 16 13" shape-rendering="crispEdges"><path fill="#ff0000" d="M0 0h3v1h-3zM0 1h5v1h-5zM0 2h7v1h-7zM1 3h8v1h-8zM2 4h8v1h-8zM3 5h8v1h-8zM4 6h8v1h-8zM5 7h8v1h-8zM6 8h8v1h-8zM7 9h8v1h-8zM9 10h6v1h-6zM10 11h6v1h-6zM12 12h4v1h-4z"/><path fill="#800000" d="M2 0h1v1h-1zM0 1h1v1h-1zM3 1h1v1h-1zM1 2h1v1h-1zM4 2h1v1h-1zM1 3h1v1h-1zM4 3h1v1h-1zM6 3h1v1h-1zM3 4h1v1h-1zM6 4h1v1h-1zM3 5h1v1h-1zM6 5h1v1h-1zM8 5h1v1h-1zM5 6h1v1h-1zM7 6h1v1h-1zM9 6h1v1h-1zM5 7h1v1h-1zM9 7h1v1h-1zM7 8h1v1h-1zM9 8h1v1h-1zM11 8h1v1h-1zM8 9h1v1h-1zM11 9h1v1h-1zM10 10h1v1h-1zM12 10h1v1h-1zM11 11h1v1h-1zM13 11h1v1h-1zM15 11h1v1h-1zM13 12h1v1h-1zM15 12h1v1h-1z"/></svg>
<div class="t" style="left:83.3px;top:156px;letter-spacing:-0.18px;">SDL.CdeLigQteCde</div>
<div style="left:54px;top:179px;width:9px;height:1px;background:repeating-linear-gradient(to right,#808080 0,#808080 1px,transparent 1px,transparent 2px);"></div>
<svg style="left:63px;top:172px" width="16" height="13" viewBox="0 0 16 13" shape-rendering="crispEdges"><path fill="#ff0000" d="M0 0h3v1h-3zM0 1h5v1h-5zM0 2h7v1h-7zM1 3h8v1h-8zM2 4h8v1h-8zM3 5h8v1h-8zM4 6h8v1h-8zM5 7h8v1h-8zM6 8h8v1h-8zM7 9h8v1h-8zM9 10h6v1h-6zM10 11h6v1h-6zM12 12h4v1h-4z"/><path fill="#800000" d="M2 0h1v1h-1zM0 1h1v1h-1zM3 1h1v1h-1zM1 2h1v1h-1zM4 2h1v1h-1zM1 3h1v1h-1zM4 3h1v1h-1zM6 3h1v1h-1zM3 4h1v1h-1zM6 4h1v1h-1zM3 5h1v1h-1zM6 5h1v1h-1zM8 5h1v1h-1zM5 6h1v1h-1zM7 6h1v1h-1zM9 6h1v1h-1zM5 7h1v1h-1zM9 7h1v1h-1zM7 8h1v1h-1zM9 8h1v1h-1zM11 8h1v1h-1zM8 9h1v1h-1zM11 9h1v1h-1zM10 10h1v1h-1zM12 10h1v1h-1zM11 11h1v1h-1zM13 11h1v1h-1zM15 11h1v1h-1zM13 12h1v1h-1zM15 12h1v1h-1z"/></svg>
<div class="t" style="left:83.3px;top:172px;letter-spacing:-0.18px;">SDL.CdeLigQteCom</div>
<div style="left:54px;top:195px;width:9px;height:1px;background:repeating-linear-gradient(to right,#808080 0,#808080 1px,transparent 1px,transparent 2px);"></div>
<svg style="left:63px;top:188px" width="16" height="13" viewBox="0 0 16 13" shape-rendering="crispEdges"><path fill="#ff0000" d="M0 0h3v1h-3zM0 1h5v1h-5zM0 2h7v1h-7zM1 3h8v1h-8zM2 4h8v1h-8zM3 5h8v1h-8zM4 6h8v1h-8zM5 7h8v1h-8zM6 8h8v1h-8zM7 9h8v1h-8zM9 10h6v1h-6zM10 11h6v1h-6zM12 12h4v1h-4z"/><path fill="#800000" d="M2 0h1v1h-1zM0 1h1v1h-1zM3 1h1v1h-1zM1 2h1v1h-1zM4 2h1v1h-1zM1 3h1v1h-1zM4 3h1v1h-1zM6 3h1v1h-1zM3 4h1v1h-1zM6 4h1v1h-1zM3 5h1v1h-1zM6 5h1v1h-1zM8 5h1v1h-1zM5 6h1v1h-1zM7 6h1v1h-1zM9 6h1v1h-1zM5 7h1v1h-1zM9 7h1v1h-1zM7 8h1v1h-1zM9 8h1v1h-1zM11 8h1v1h-1zM8 9h1v1h-1zM11 9h1v1h-1zM10 10h1v1h-1zM12 10h1v1h-1zM11 11h1v1h-1zM13 11h1v1h-1zM15 11h1v1h-1zM13 12h1v1h-1zM15 12h1v1h-1z"/></svg>
<div class="t" style="left:83.3px;top:188px;letter-spacing:-0.12px;">SDL.CdeLigRefArt</div>
<div style="left:54px;top:211px;width:9px;height:1px;background:repeating-linear-gradient(to right,#808080 0,#808080 1px,transparent 1px,transparent 2px);"></div>
<svg style="left:63px;top:204px" width="16" height="13" viewBox="0 0 16 13" shape-rendering="crispEdges"><path fill="#ff0000" d="M0 0h3v1h-3zM0 1h5v1h-5zM0 2h7v1h-7zM1 3h8v1h-8zM2 4h8v1h-8zM3 5h8v1h-8zM4 6h8v1h-8zM5 7h8v1h-8zM6 8h8v1h-8zM7 9h8v1h-8zM9 10h6v1h-6zM10 11h6v1h-6zM12 12h4v1h-4z"/><path fill="#800000" d="M2 0h1v1h-1zM0 1h1v1h-1zM3 1h1v1h-1zM1 2h1v1h-1zM4 2h1v1h-1zM1 3h1v1h-1zM4 3h1v1h-1zM6 3h1v1h-1zM3 4h1v1h-1zM6 4h1v1h-1zM3 5h1v1h-1zM6 5h1v1h-1zM8 5h1v1h-1zM5 6h1v1h-1zM7 6h1v1h-1zM9 6h1v1h-1zM5 7h1v1h-1zM9 7h1v1h-1zM7 8h1v1h-1zM9 8h1v1h-1zM11 8h1v1h-1zM8 9h1v1h-1zM11 9h1v1h-1zM10 10h1v1h-1zM12 10h1v1h-1zM11 11h1v1h-1zM13 11h1v1h-1zM15 11h1v1h-1zM13 12h1v1h-1zM15 12h1v1h-1z"/></svg>
<div class="t" style="left:83.3px;top:204px;letter-spacing:-0.06px;">SDL.CdeLigTarRef</div>
<div style="left:54px;top:227px;width:9px;height:1px;background:repeating-linear-gradient(to right,#808080 0,#808080 1px,transparent 1px,transparent 2px);"></div>
<svg style="left:63px;top:220px" width="16" height="13" viewBox="0 0 16 13" shape-rendering="crispEdges"><path fill="#ff0000" d="M0 0h3v1h-3zM0 1h5v1h-5zM0 2h7v1h-7zM1 3h8v1h-8zM2 4h8v1h-8zM3 5h8v1h-8zM4 6h8v1h-8zM5 7h8v1h-8zM6 8h8v1h-8zM7 9h8v1h-8zM9 10h6v1h-6zM10 11h6v1h-6zM12 12h4v1h-4z"/><path fill="#800000" d="M2 0h1v1h-1zM0 1h1v1h-1zM3 1h1v1h-1zM1 2h1v1h-1zM4 2h1v1h-1zM1 3h1v1h-1zM4 3h1v1h-1zM6 3h1v1h-1zM3 4h1v1h-1zM6 4h1v1h-1zM3 5h1v1h-1zM6 5h1v1h-1zM8 5h1v1h-1zM5 6h1v1h-1zM7 6h1v1h-1zM9 6h1v1h-1zM5 7h1v1h-1zM9 7h1v1h-1zM7 8h1v1h-1zM9 8h1v1h-1zM11 8h1v1h-1zM8 9h1v1h-1zM11 9h1v1h-1zM10 10h1v1h-1zM12 10h1v1h-1zM11 11h1v1h-1zM13 11h1v1h-1zM15 11h1v1h-1zM13 12h1v1h-1zM15 12h1v1h-1z"/></svg>
<div class="t" style="left:83.3px;top:220px;letter-spacing:-0.236px;">SDL.CdELigUnMeQteCom</div>
<div style="left:54px;top:243px;width:9px;height:1px;background:repeating-linear-gradient(to right,#808080 0,#808080 1px,transparent 1px,transparent 2px);"></div>
<svg style="left:63px;top:236px" width="16" height="13" viewBox="0 0 16 13" shape-rendering="crispEdges"><path fill="#ff0000" d="M0 0h3v1h-3zM0 1h5v1h-5zM0 2h7v1h-7zM1 3h8v1h-8zM2 4h8v1h-8zM3 5h8v1h-8zM4 6h8v1h-8zM5 7h8v1h-8zM6 8h8v1h-8zM7 9h8v1h-8zM9 10h6v1h-6zM10 11h6v1h-6zM12 12h4v1h-4z"/><path fill="#800000" d="M2 0h1v1h-1zM0 1h1v1h-1zM3 1h1v1h-1zM1 2h1v1h-1zM4 2h1v1h-1zM1 3h1v1h-1zM4 3h1v1h-1zM6 3h1v1h-1zM3 4h1v1h-1zM6 4h1v1h-1zM3 5h1v1h-1zM6 5h1v1h-1zM8 5h1v1h-1zM5 6h1v1h-1zM7 6h1v1h-1zM9 6h1v1h-1zM5 7h1v1h-1zM9 7h1v1h-1zM7 8h1v1h-1zM9 8h1v1h-1zM11 8h1v1h-1zM8 9h1v1h-1zM11 9h1v1h-1zM10 10h1v1h-1zM12 10h1v1h-1zM11 11h1v1h-1zM13 11h1v1h-1zM15 11h1v1h-1zM13 12h1v1h-1zM15 12h1v1h-1z"/></svg>
<div class="t" style="left:83.3px;top:236px;letter-spacing:-0.3px;">SDL.CdeNumCom</div>
<div style="left:54px;top:259px;width:9px;height:1px;background:repeating-linear-gradient(to right,#808080 0,#808080 1px,transparent 1px,transparent 2px);"></div>
<svg style="left:63px;top:252px" width="16" height="13" viewBox="0 0 16 13" shape-rendering="crispEdges"><path fill="#ff0000" d="M0 0h3v1h-3zM0 1h5v1h-5zM0 2h7v1h-7zM1 3h8v1h-8zM2 4h8v1h-8zM3 5h8v1h-8zM4 6h8v1h-8zM5 7h8v1h-8zM6 8h8v1h-8zM7 9h8v1h-8zM9 10h6v1h-6zM10 11h6v1h-6zM12 12h4v1h-4z"/><path fill="#800000" d="M2 0h1v1h-1zM0 1h1v1h-1zM3 1h1v1h-1zM1 2h1v1h-1zM4 2h1v1h-1zM1 3h1v1h-1zM4 3h1v1h-1zM6 3h1v1h-1zM3 4h1v1h-1zM6 4h1v1h-1zM3 5h1v1h-1zM6 5h1v1h-1zM8 5h1v1h-1zM5 6h1v1h-1zM7 6h1v1h-1zM9 6h1v1h-1zM5 7h1v1h-1zM9 7h1v1h-1zM7 8h1v1h-1zM9 8h1v1h-1zM11 8h1v1h-1zM8 9h1v1h-1zM11 9h1v1h-1zM10 10h1v1h-1zM12 10h1v1h-1zM11 11h1v1h-1zM13 11h1v1h-1zM15 11h1v1h-1zM13 12h1v1h-1zM15 12h1v1h-1z"/></svg>
<div class="t" style="left:83.3px;top:252px;letter-spacing:-0.3px;">SDL.CdeNumLig</div>
<div style="left:54px;top:275px;width:9px;height:1px;background:repeating-linear-gradient(to right,#808080 0,#808080 1px,transparent 1px,transparent 2px);"></div>
<svg style="left:63px;top:268px" width="16" height="13" viewBox="0 0 16 13" shape-rendering="crispEdges"><path fill="#ff0000" d="M0 0h3v1h-3zM0 1h5v1h-5zM0 2h7v1h-7zM1 3h8v1h-8zM2 4h8v1h-8zM3 5h8v1h-8zM4 6h8v1h-8zM5 7h8v1h-8zM6 8h8v1h-8zM7 9h8v1h-8zM9 10h6v1h-6zM10 11h6v1h-6zM12 12h4v1h-4z"/><path fill="#800000" d="M2 0h1v1h-1zM0 1h1v1h-1zM3 1h1v1h-1zM1 2h1v1h-1zM4 2h1v1h-1zM1 3h1v1h-1zM4 3h1v1h-1zM6 3h1v1h-1zM3 4h1v1h-1zM6 4h1v1h-1zM3 5h1v1h-1zM6 5h1v1h-1zM8 5h1v1h-1zM5 6h1v1h-1zM7 6h1v1h-1zM9 6h1v1h-1zM5 7h1v1h-1zM9 7h1v1h-1zM7 8h1v1h-1zM9 8h1v1h-1zM11 8h1v1h-1zM8 9h1v1h-1zM11 9h1v1h-1zM10 10h1v1h-1zM12 10h1v1h-1zM11 11h1v1h-1zM13 11h1v1h-1zM15 11h1v1h-1zM13 12h1v1h-1zM15 12h1v1h-1z"/></svg>
<div class="t" style="left:83.3px;top:268px;letter-spacing:-0.225px;">SDL.CliGenRef</div>
<div style="left:54px;top:291px;width:9px;height:1px;background:repeating-linear-gradient(to right,#808080 0,#808080 1px,transparent 1px,transparent 2px);"></div>
<svg style="left:63px;top:284px" width="16" height="13" viewBox="0 0 16 13" shape-rendering="crispEdges"><path fill="#ff0000" d="M0 0h3v1h-3zM0 1h5v1h-5zM0 2h7v1h-7zM1 3h8v1h-8zM2 4h8v1h-8zM3 5h8v1h-8zM4 6h8v1h-8zM5 7h8v1h-8zM6 8h8v1h-8zM7 9h8v1h-8zM9 10h6v1h-6zM10 11h6v1h-6zM12 12h4v1h-4z"/><path fill="#800000" d="M2 0h1v1h-1zM0 1h1v1h-1zM3 1h1v1h-1zM1 2h1v1h-1zM4 2h1v1h-1zM1 3h1v1h-1zM4 3h1v1h-1zM6 3h1v1h-1zM3 4h1v1h-1zM6 4h1v1h-1zM3 5h1v1h-1zM6 5h1v1h-1zM8 5h1v1h-1zM5 6h1v1h-1zM7 6h1v1h-1zM9 6h1v1h-1zM5 7h1v1h-1zM9 7h1v1h-1zM7 8h1v1h-1zM9 8h1v1h-1zM11 8h1v1h-1zM8 9h1v1h-1zM11 9h1v1h-1zM10 10h1v1h-1zM12 10h1v1h-1zM11 11h1v1h-1zM13 11h1v1h-1zM15 11h1v1h-1zM13 12h1v1h-1zM15 12h1v1h-1z"/></svg>
<div class="t" style="left:86.3px;top:284px;letter-spacing:-0.15px;">SDL.CliResRef</div>
<div style="left:155px;top:285px;width:1px;height:12px;background:#000000;"></div>
<div style="left:29px;top:303px;width:9px;height:9px;background:#ffffff;box-sizing:border-box;border:1px solid #808080;"></div>
<div style="left:31px;top:307px;width:5px;height:1px;background:#000000;"></div>
<div style="left:39px;top:307px;width:5px;height:1px;background:repeating-linear-gradient(to right,#808080 0,#808080 1px,transparent 1px,transparent 2px);"></div>
<svg style="left:44px;top:300px" width="15" height="13" viewBox="0 0 15 13" shape-rendering="crispEdges"><path fill="#808080" d="M2 0h5v1h-5zM1 1h1v1h-1zM7 1h1v1h-1zM0 2h1v1h-1zM8 2h6v1h-6zM0 3h1v1h-1zM13 3h1v1h-1zM0 4h1v1h-1zM13 4h1v1h-1zM0 5h1v1h-1zM13 5h1v1h-1zM0 6h1v1h-1zM13 6h1v1h-1zM0 7h1v1h-1zM13 7h1v1h-1zM0 8h1v1h-1zM13 8h1v1h-1zM0 9h1v1h-1zM13 9h1v1h-1zM0 10h1v1h-1zM13 10h1v1h-1zM0 11h14v1h-14z"/><path fill="#ffff00" d="M2 1h1v1h-1zM4 1h1v1h-1zM6 1h1v1h-1zM3 2h1v1h-1zM5 2h1v1h-1zM2 4h1v1h-1zM4 4h1v1h-1zM6 4h1v1h-1zM8 4h1v1h-1zM10 4h1v1h-1zM12 4h1v1h-1zM3 5h1v1h-1zM5 5h1v1h-1zM7 5h1v1h-1zM9 5h1v1h-1zM11 5h1v1h-1zM2 6h1v1h-1zM4 6h1v1h-1zM6 6h1v1h-1zM8 6h1v1h-1zM10 6h1v1h-1zM12 6h1v1h-1zM3 7h1v1h-1zM5 7h1v1h-1zM7 7h1v1h-1zM9 7h1v1h-1zM11 7h1v1h-1zM2 8h1v1h-1zM4 8h1v1h-1zM6 8h1v1h-1zM8 8h1v1h-1zM10 8h1v1h-1zM12 8h1v1h-1zM3 9h1v1h-1zM5 9h1v1h-1zM7 9h1v1h-1zM9 9h1v1h-1zM11 9h1v1h-1zM2 10h1v1h-1zM4 10h1v1h-1zM6 10h1v1h-1zM8 10h1v1h-1zM10 10h1v1h-1zM12 10h1v1h-1z"/><path fill="#ffffff" d="M3 1h1v1h-1zM5 1h1v1h-1zM1 2h2v1h-2zM4 2h1v1h-1zM6 2h2v1h-2zM1 3h12v1h-12zM1 4h1v1h-1zM3 4h1v1h-1zM5 4h1v1h-1zM7 4h1v1h-1zM9 4h1v1h-1zM11 4h1v1h-1zM1 5h2v1h-2zM4 5h1v1h-1zM6 5h1v1h-1zM8 5h1v1h-1zM10 5h1v1h-1zM12 5h1v1h-1zM1 6h1v1h-1zM3 6h1v1h-1zM5 6h1v1h-1zM7 6h1v1h-1zM9 6h1v1h-1zM11 6h1v1h-1zM1 7h2v1h-2zM4 7h1v1h-1zM6 7h1v1h-1zM8 7h1v1h-1zM10 7h1v1h-1zM12 7h1v1h-1zM1 8h1v1h-1zM3 8h1v1h-1zM5 8h1v1h-1zM7 8h1v1h-1zM9 8h1v1h-1zM11 8h1v1h-1zM1 9h2v1h-2zM4 9h1v1h-1zM6 9h1v1h-1zM8 9h1v1h-1zM10 9h1v1h-1zM12 9h1v1h-1zM1 10h1v1h-1zM3 10h1v1h-1zM5 10h1v1h-1zM7 10h1v1h-1zM9 10h1v1h-1zM11 10h1v1h-1z"/><path fill="#000000" d="M14 3h1v1h-1zM14 4h1v1h-1zM14 5h1v1h-1zM14 6h1v1h-1zM14 7h1v1h-1zM14 8h1v1h-1zM14 9h1v1h-1zM14 10h1v1h-1zM14 11h1v1h-1zM1 12h14v1h-14z"/></svg>
<div class="t" style="left:64.5px;top:300px;letter-spacing:-0.563px;">CtxDemCom</div>
<div style="left:54px;top:323px;width:9px;height:1px;background:repeating-linear-gradient(to right,#808080 0,#808080 1px,transparent 1px,transparent 2px);"></div>
<svg style="left:63px;top:316px" width="16" height="13" viewBox="0 0 16 13" shape-rendering="crispEdges"><path fill="#ff0000" d="M0 0h3v1h-3zM0 1h5v1h-5zM0 2h7v1h-7zM1 3h8v1h-8zM2 4h8v1h-8zM3 5h8v1h-8zM4 6h8v1h-8zM5 7h8v1h-8zM6 8h8v1h-8zM7 9h8v1h-8zM9 10h6v1h-6zM10 11h6v1h-6zM12 12h4v1h-4z"/><path fill="#800000" d="M2 0h1v1h-1zM0 1h1v1h-1zM3 1h1v1h-1zM1 2h1v1h-1zM4 2h1v1h-1zM1 3h1v1h-1zM4 3h1v1h-1zM6 3h1v1h-1zM3 4h1v1h-1zM6 4h1v1h-1zM3 5h1v1h-1zM6 5h1v1h-1zM8 5h1v1h-1zM5 6h1v1h-1zM7 6h1v1h-1zM9 6h1v1h-1zM5 7h1v1h-1zM9 7h1v1h-1zM7 8h1v1h-1zM9 8h1v1h-1zM11 8h1v1h-1zM8 9h1v1h-1zM11 9h1v1h-1zM10 10h1v1h-1zM12 10h1v1h-1zM11 11h1v1h-1zM13 11h1v1h-1zM15 11h1v1h-1zM13 12h1v1h-1zM15 12h1v1h-1z"/></svg>
<div class="t" style="left:83.3px;top:316px;letter-spacing:-0.3px;">SDE.CdeComEnt</div>
<div style="left:54px;top:339px;width:9px;height:1px;background:repeating-linear-gradient(to right,#808080 0,#808080 1px,transparent 1px,transparent 2px);"></div>
<svg style="left:63px;top:332px" width="16" height="13" viewBox="0 0 16 13" shape-rendering="crispEdges"><path fill="#ff0000" d="M0 0h3v1h-3zM0 1h5v1h-5zM0 2h7v1h-7zM1 3h8v1h-8zM2 4h8v1h-8zM3 5h8v1h-8zM4 6h8v1h-8zM5 7h8v1h-8zM6 8h8v1h-8zM7 9h8v1h-8zM9 10h6v1h-6zM10 11h6v1h-6zM12 12h4v1h-4z"/><path fill="#800000" d="M2 0h1v1h-1zM0 1h1v1h-1zM3 1h1v1h-1zM1 2h1v1h-1zM4 2h1v1h-1zM1 3h1v1h-1zM4 3h1v1h-1zM6 3h1v1h-1zM3 4h1v1h-1zM6 4h1v1h-1zM3 5h1v1h-1zM6 5h1v1h-1zM8 5h1v1h-1zM5 6h1v1h-1zM7 6h1v1h-1zM9 6h1v1h-1zM5 7h1v1h-1zM9 7h1v1h-1zM7 8h1v1h-1zM9 8h1v1h-1zM11 8h1v1h-1zM8 9h1v1h-1zM11 9h1v1h-1zM10 10h1v1h-1zM12 10h1v1h-1zM11 11h1v1h-1zM13 11h1v1h-1zM15 11h1v1h-1zM13 12h1v1h-1zM15 12h1v1h-1z"/></svg>
<div class="t" style="left:83.3px;top:332px;letter-spacing:-0.164px;">VDE.TESTGFDC</div>
<div style="left:54px;top:355px;width:9px;height:1px;background:repeating-linear-gradient(to right,#808080 0,#808080 1px,transparent 1px,transparent 2px);"></div>
<svg style="left:63px;top:348px" width="16" height="13" viewBox="0 0 16 13" shape-rendering="crispEdges"><path fill="#ff0000" d="M0 0h3v1h-3zM0 1h5v1h-5zM0 2h7v1h-7zM1 3h8v1h-8zM2 4h8v1h-8zM3 5h8v1h-8zM4 6h8v1h-8zM5 7h8v1h-8zM6 8h8v1h-8zM7 9h8v1h-8zM9 10h6v1h-6zM10 11h6v1h-6zM12 12h4v1h-4z"/><path fill="#800000" d="M2 0h1v1h-1zM0 1h1v1h-1zM3 1h1v1h-1zM1 2h1v1h-1zM4 2h1v1h-1zM1 3h1v1h-1zM4 3h1v1h-1zM6 3h1v1h-1zM3 4h1v1h-1zM6 4h1v1h-1zM3 5h1v1h-1zM6 5h1v1h-1zM8 5h1v1h-1zM5 6h1v1h-1zM7 6h1v1h-1zM9 6h1v1h-1zM5 7h1v1h-1zM9 7h1v1h-1zM7 8h1v1h-1zM9 8h1v1h-1zM11 8h1v1h-1zM8 9h1v1h-1zM11 9h1v1h-1zM10 10h1v1h-1zM12 10h1v1h-1zM11 11h1v1h-1zM13 11h1v1h-1zM15 11h1v1h-1zM13 12h1v1h-1zM15 12h1v1h-1z"/></svg>
<div class="t" style="left:83.3px;top:348px;letter-spacing:-0.246px;">VDE.TESTGFDR</div>
<div style="left:54px;top:371px;width:9px;height:1px;background:repeating-linear-gradient(to right,#808080 0,#808080 1px,transparent 1px,transparent 2px);"></div>
<svg style="left:63px;top:364px" width="16" height="13" viewBox="0 0 16 13" shape-rendering="crispEdges"><path fill="#ff0000" d="M0 0h3v1h-3zM0 1h5v1h-5zM0 2h7v1h-7zM1 3h8v1h-8zM2 4h8v1h-8zM3 5h8v1h-8zM4 6h8v1h-8zM5 7h8v1h-8zM6 8h8v1h-8zM7 9h8v1h-8zM9 10h6v1h-6zM10 11h6v1h-6zM12 12h4v1h-4z"/><path fill="#800000" d="M2 0h1v1h-1zM0 1h1v1h-1zM3 1h1v1h-1zM1 2h1v1h-1zM4 2h1v1h-1zM1 3h1v1h-1zM4 3h1v1h-1zM6 3h1v1h-1zM3 4h1v1h-1zM6 4h1v1h-1zM3 5h1v1h-1zM6 5h1v1h-1zM8 5h1v1h-1zM5 6h1v1h-1zM7 6h1v1h-1zM9 6h1v1h-1zM5 7h1v1h-1zM9 7h1v1h-1zM7 8h1v1h-1zM9 8h1v1h-1zM11 8h1v1h-1zM8 9h1v1h-1zM11 9h1v1h-1zM10 10h1v1h-1zM12 10h1v1h-1zM11 11h1v1h-1zM13 11h1v1h-1zM15 11h1v1h-1zM13 12h1v1h-1zM15 12h1v1h-1z"/></svg>
<div class="t" style="left:83.3px;top:364px;letter-spacing:-0.246px;">VDL.TESTGFDC</div>
<div style="left:54px;top:387px;width:9px;height:1px;background:repeating-linear-gradient(to right,#808080 0,#808080 1px,transparent 1px,transparent 2px);"></div>
<svg style="left:63px;top:380px" width="16" height="13" viewBox="0 0 16 13" shape-rendering="crispEdges"><path fill="#ff0000" d="M0 0h3v1h-3zM0 1h5v1h-5zM0 2h7v1h-7zM1 3h8v1h-8zM2 4h8v1h-8zM3 5h8v1h-8zM4 6h8v1h-8zM5 7h8v1h-8zM6 8h8v1h-8zM7 9h8v1h-8zM9 10h6v1h-6zM10 11h6v1h-6zM12 12h4v1h-4z"/><path fill="#800000" d="M2 0h1v1h-1zM0 1h1v1h-1zM3 1h1v1h-1zM1 2h1v1h-1zM4 2h1v1h-1zM1 3h1v1h-1zM4 3h1v1h-1zM6 3h1v1h-1zM3 4h1v1h-1zM6 4h1v1h-1zM3 5h1v1h-1zM6 5h1v1h-1zM8 5h1v1h-1zM5 6h1v1h-1zM7 6h1v1h-1zM9 6h1v1h-1zM5 7h1v1h-1zM9 7h1v1h-1zM7 8h1v1h-1zM9 8h1v1h-1zM11 8h1v1h-1zM8 9h1v1h-1zM11 9h1v1h-1zM10 10h1v1h-1zM12 10h1v1h-1zM11 11h1v1h-1zM13 11h1v1h-1zM15 11h1v1h-1zM13 12h1v1h-1zM15 12h1v1h-1z"/></svg>
<div class="t" style="left:83.3px;top:380px;letter-spacing:-0.246px;">VDL.TESTGFDR</div>
<div style="left:54px;top:403px;width:9px;height:1px;background:repeating-linear-gradient(to right,#808080 0,#808080 1px,transparent 1px,transparent 2px);"></div>
<svg style="left:63px;top:396px" width="16" height="13" viewBox="0 0 16 13" shape-rendering="crispEdges"><path fill="#ff0000" d="M0 0h3v1h-3zM0 1h5v1h-5zM0 2h7v1h-7zM1 3h8v1h-8zM2 4h8v1h-8zM3 5h8v1h-8zM4 6h8v1h-8zM5 7h8v1h-8zM6 8h8v1h-8zM7 9h8v1h-8zM9 10h6v1h-6zM10 11h6v1h-6zM12 12h4v1h-4z"/><path fill="#800000" d="M2 0h1v1h-1zM0 1h1v1h-1zM3 1h1v1h-1zM1 2h1v1h-1zM4 2h1v1h-1zM1 3h1v1h-1zM4 3h1v1h-1zM6 3h1v1h-1zM3 4h1v1h-1zM6 4h1v1h-1zM3 5h1v1h-1zM6 5h1v1h-1zM8 5h1v1h-1zM5 6h1v1h-1zM7 6h1v1h-1zM9 6h1v1h-1zM5 7h1v1h-1zM9 7h1v1h-1zM7 8h1v1h-1zM9 8h1v1h-1zM11 8h1v1h-1zM8 9h1v1h-1zM11 9h1v1h-1zM10 10h1v1h-1zM12 10h1v1h-1zM11 11h1v1h-1zM13 11h1v1h-1zM15 11h1v1h-1zM13 12h1v1h-1zM15 12h1v1h-1z"/></svg>
<div class="t" style="left:83.3px;top:396px;letter-spacing:-0.375px;">SCL.CliGenNom</div>
<div style="left:54px;top:419px;width:9px;height:1px;background:repeating-linear-gradient(to right,#808080 0,#808080 1px,transparent 1px,transparent 2px);"></div>
<svg style="left:63px;top:412px" width="16" height="13" viewBox="0 0 16 13" shape-rendering="crispEdges"><path fill="#ff0000" d="M0 0h3v1h-3zM0 1h5v1h-5zM0 2h7v1h-7zM1 3h8v1h-8zM2 4h8v1h-8zM3 5h8v1h-8zM4 6h8v1h-8zM5 7h8v1h-8zM6 8h8v1h-8zM7 9h8v1h-8zM9 10h6v1h-6zM10 11h6v1h-6zM12 12h4v1h-4z"/><path fill="#800000" d="M2 0h1v1h-1zM0 1h1v1h-1zM3 1h1v1h-1zM1 2h1v1h-1zM4 2h1v1h-1zM1 3h1v1h-1zM4 3h1v1h-1zM6 3h1v1h-1zM3 4h1v1h-1zM6 4h1v1h-1zM3 5h1v1h-1zM6 5h1v1h-1zM8 5h1v1h-1zM5 6h1v1h-1zM7 6h1v1h-1zM9 6h1v1h-1zM5 7h1v1h-1zM9 7h1v1h-1zM7 8h1v1h-1zM9 8h1v1h-1zM11 8h1v1h-1zM8 9h1v1h-1zM11 9h1v1h-1zM10 10h1v1h-1zM12 10h1v1h-1zM11 11h1v1h-1zM13 11h1v1h-1zM15 11h1v1h-1zM13 12h1v1h-1zM15 12h1v1h-1z"/></svg>
<div class="t" style="left:83.3px;top:412px;letter-spacing:-0.047px;">VCL.Cli_Test_Logique</div>
<div style="left:54px;top:435px;width:9px;height:1px;background:repeating-linear-gradient(to right,#808080 0,#808080 1px,transparent 1px,transparent 2px);"></div>
<svg style="left:63px;top:428px" width="16" height="13" viewBox="0 0 16 13" shape-rendering="crispEdges"><path fill="#ff0000" d="M0 0h3v1h-3zM0 1h5v1h-5zM0 2h7v1h-7zM1 3h8v1h-8zM2 4h8v1h-8zM3 5h8v1h-8zM4 6h8v1h-8zM5 7h8v1h-8zM6 8h8v1h-8zM7 9h8v1h-8zM9 10h6v1h-6zM10 11h6v1h-6zM12 12h4v1h-4z"/><path fill="#800000" d="M2 0h1v1h-1zM0 1h1v1h-1zM3 1h1v1h-1zM1 2h1v1h-1zM4 2h1v1h-1zM1 3h1v1h-1zM4 3h1v1h-1zM6 3h1v1h-1zM3 4h1v1h-1zM6 4h1v1h-1zM3 5h1v1h-1zM6 5h1v1h-1zM8 5h1v1h-1zM5 6h1v1h-1zM7 6h1v1h-1zM9 6h1v1h-1zM5 7h1v1h-1zM9 7h1v1h-1zM7 8h1v1h-1zM9 8h1v1h-1zM11 8h1v1h-1zM8 9h1v1h-1zM11 9h1v1h-1zM10 10h1v1h-1zM12 10h1v1h-1zM11 11h1v1h-1zM13 11h1v1h-1zM15 11h1v1h-1zM13 12h1v1h-1zM15 12h1v1h-1z"/></svg>
<div class="t" style="left:83.3px;top:428px;letter-spacing:-0.15px;">SAS.GenDesArt</div>
<div style="left:54px;top:451px;width:9px;height:1px;background:repeating-linear-gradient(to right,#808080 0,#808080 1px,transparent 1px,transparent 2px);"></div>
<svg style="left:63px;top:444px" width="16" height="13" viewBox="0 0 16 13" shape-rendering="crispEdges"><path fill="#ff0000" d="M0 0h3v1h-3zM0 1h5v1h-5zM0 2h7v1h-7zM1 3h8v1h-8zM2 4h8v1h-8zM3 5h8v1h-8zM4 6h8v1h-8zM5 7h8v1h-8zM6 8h8v1h-8zM7 9h8v1h-8zM9 10h6v1h-6zM10 11h6v1h-6zM12 12h4v1h-4z"/><path fill="#800000" d="M2 0h1v1h-1zM0 1h1v1h-1zM3 1h1v1h-1zM1 2h1v1h-1zM4 2h1v1h-1zM1 3h1v1h-1zM4 3h1v1h-1zM6 3h1v1h-1zM3 4h1v1h-1zM6 4h1v1h-1zM3 5h1v1h-1zM6 5h1v1h-1zM8 5h1v1h-1zM5 6h1v1h-1zM7 6h1v1h-1zM9 6h1v1h-1zM5 7h1v1h-1zM9 7h1v1h-1zM7 8h1v1h-1zM9 8h1v1h-1zM11 8h1v1h-1zM8 9h1v1h-1zM11 9h1v1h-1zM10 10h1v1h-1zM12 10h1v1h-1zM11 11h1v1h-1zM13 11h1v1h-1zM15 11h1v1h-1zM13 12h1v1h-1zM15 12h1v1h-1z"/></svg>
<div class="t" style="left:83.3px;top:444px;letter-spacing:-0.164px;">VAS.TESTGFDD</div>
<div style="left:54px;top:467px;width:9px;height:1px;background:repeating-linear-gradient(to right,#808080 0,#808080 1px,transparent 1px,transparent 2px);"></div>
<svg style="left:63px;top:460px" width="16" height="13" viewBox="0 0 16 13" shape-rendering="crispEdges"><path fill="#ff0000" d="M0 0h3v1h-3zM0 1h5v1h-5zM0 2h7v1h-7zM1 3h8v1h-8zM2 4h8v1h-8zM3 5h8v1h-8zM4 6h8v1h-8zM5 7h8v1h-8zM6 8h8v1h-8zM7 9h8v1h-8zM9 10h6v1h-6zM10 11h6v1h-6zM12 12h4v1h-4z"/><path fill="#800000" d="M2 0h1v1h-1zM0 1h1v1h-1zM3 1h1v1h-1zM1 2h1v1h-1zM4 2h1v1h-1zM1 3h1v1h-1zM4 3h1v1h-1zM6 3h1v1h-1zM3 4h1v1h-1zM6 4h1v1h-1zM3 5h1v1h-1zM6 5h1v1h-1zM8 5h1v1h-1zM5 6h1v1h-1zM7 6h1v1h-1zM9 6h1v1h-1zM5 7h1v1h-1zM9 7h1v1h-1zM7 8h1v1h-1zM9 8h1v1h-1zM11 8h1v1h-1zM8 9h1v1h-1zM11 9h1v1h-1zM10 10h1v1h-1zM12 10h1v1h-1zM11 11h1v1h-1zM13 11h1v1h-1zM15 11h1v1h-1zM13 12h1v1h-1zM15 12h1v1h-1z"/></svg>
<div class="t" style="left:83.3px;top:460px;letter-spacing:-0.3px;">SCO.CliComNom</div>
<div style="left:29px;top:479px;width:9px;height:9px;background:#ffffff;box-sizing:border-box;border:1px solid #808080;"></div>
<div style="left:31px;top:483px;width:5px;height:1px;background:#000000;"></div>
<div style="left:33px;top:481px;width:1px;height:5px;background:#000000;"></div>
<div style="left:39px;top:483px;width:5px;height:1px;background:repeating-linear-gradient(to right,#808080 0,#808080 1px,transparent 1px,transparent 2px);"></div>
<svg style="left:44px;top:476px" width="15" height="13" viewBox="0 0 15 13" shape-rendering="crispEdges"><path fill="#808080" d="M2 0h5v1h-5zM1 1h1v1h-1zM7 1h1v1h-1zM0 2h1v1h-1zM8 2h6v1h-6zM0 3h1v1h-1zM13 3h1v1h-1zM0 4h1v1h-1zM13 4h1v1h-1zM0 5h1v1h-1zM13 5h1v1h-1zM0 6h1v1h-1zM13 6h1v1h-1zM0 7h1v1h-1zM13 7h1v1h-1zM0 8h1v1h-1zM13 8h1v1h-1zM0 9h1v1h-1zM13 9h1v1h-1zM0 10h1v1h-1zM13 10h1v1h-1zM0 11h14v1h-14z"/><path fill="#ffff00" d="M2 1h1v1h-1zM4 1h1v1h-1zM6 1h1v1h-1zM3 2h1v1h-1zM5 2h1v1h-1zM2 4h1v1h-1zM4 4h1v1h-1zM6 4h1v1h-1zM8 4h1v1h-1zM10 4h1v1h-1zM12 4h1v1h-1zM3 5h1v1h-1zM5 5h1v1h-1zM7 5h1v1h-1zM9 5h1v1h-1zM11 5h1v1h-1zM2 6h1v1h-1zM4 6h1v1h-1zM6 6h1v1h-1zM8 6h1v1h-1zM10 6h1v1h-1zM12 6h1v1h-1zM3 7h1v1h-1zM5 7h1v1h-1zM7 7h1v1h-1zM9 7h1v1h-1zM11 7h1v1h-1zM2 8h1v1h-1zM4 8h1v1h-1zM6 8h1v1h-1zM8 8h1v1h-1zM10 8h1v1h-1zM12 8h1v1h-1zM3 9h1v1h-1zM5 9h1v1h-1zM7 9h1v1h-1zM9 9h1v1h-1zM11 9h1v1h-1zM2 10h1v1h-1zM4 10h1v1h-1zM6 10h1v1h-1zM8 10h1v1h-1zM10 10h1v1h-1zM12 10h1v1h-1z"/><path fill="#ffffff" d="M3 1h1v1h-1zM5 1h1v1h-1zM1 2h2v1h-2zM4 2h1v1h-1zM6 2h2v1h-2zM1 3h12v1h-12zM1 4h1v1h-1zM3 4h1v1h-1zM5 4h1v1h-1zM7 4h1v1h-1zM9 4h1v1h-1zM11 4h1v1h-1zM1 5h2v1h-2zM4 5h1v1h-1zM6 5h1v1h-1zM8 5h1v1h-1zM10 5h1v1h-1zM12 5h1v1h-1zM1 6h1v1h-1zM3 6h1v1h-1zM5 6h1v1h-1zM7 6h1v1h-1zM9 6h1v1h-1zM11 6h1v1h-1zM1 7h2v1h-2zM4 7h1v1h-1zM6 7h1v1h-1zM8 7h1v1h-1zM10 7h1v1h-1zM12 7h1v1h-1zM1 8h1v1h-1zM3 8h1v1h-1zM5 8h1v1h-1zM7 8h1v1h-1zM9 8h1v1h-1zM11 8h1v1h-1zM1 9h2v1h-2zM4 9h1v1h-1zM6 9h1v1h-1zM8 9h1v1h-1zM10 9h1v1h-1zM12 9h1v1h-1zM1 10h1v1h-1zM3 10h1v1h-1zM5 10h1v1h-1zM7 10h1v1h-1zM9 10h1v1h-1zM11 10h1v1h-1z"/><path fill="#000000" d="M14 3h1v1h-1zM14 4h1v1h-1zM14 5h1v1h-1zM14 6h1v1h-1zM14 7h1v1h-1zM14 8h1v1h-1zM14 9h1v1h-1zM14 10h1v1h-1zM14 11h1v1h-1zM1 12h14v1h-14z"/></svg>
<div class="t" style="left:64.5px;top:476px;letter-spacing:-0.451px;">CtxDemVar</div>
<div style="left:33px;top:107px;width:1px;height:3px;background:repeating-linear-gradient(to bottom,#808080 0,#808080 1px,transparent 1px,transparent 2px);"></div>
<div style="left:33px;top:121px;width:1px;height:181px;background:repeating-linear-gradient(to bottom,#808080 0,#808080 1px,transparent 1px,transparent 2px);"></div>
<div style="left:33px;top:313px;width:1px;height:165px;background:repeating-linear-gradient(to bottom,#808080 0,#808080 1px,transparent 1px,transparent 2px);"></div>
<div style="left:52px;top:123px;width:1px;height:169px;background:repeating-linear-gradient(to bottom,#808080 0,#808080 1px,transparent 1px,transparent 2px);"></div>
<div style="left:52px;top:315px;width:1px;height:153px;background:repeating-linear-gradient(to bottom,#808080 0,#808080 1px,transparent 1px,transparent 2px);"></div>
<div style="left:213px;top:91px;width:199px;height:15px;background:#c0c0c0;"></div>
<div style="left:213px;top:106px;width:200px;height:1px;background:#000000;"></div>
<div style="left:213px;top:107px;width:199px;height:15px;background:#c0c0c0;"></div>
<div style="left:213px;top:122px;width:200px;height:1px;background:#000000;"></div>
<div class="t" style="left:221.6px;top:124px;">C</div>
<div style="left:213px;top:138px;width:200px;height:1px;background:#000000;"></div>
<div class="t" style="left:221.6px;top:140px;">MOD</div>
<div style="left:213px;top:154px;width:200px;height:1px;background:#000000;"></div>
<div class="t" style="left:221.6px;top:156px;">1</div>
<div style="left:213px;top:170px;width:200px;height:1px;background:#000000;"></div>
<div class="t" style="left:221.6px;top:172px;">1</div>
<div style="left:213px;top:186px;width:200px;height:1px;background:#000000;"></div>
<div class="t" style="left:221.6px;top:188px;letter-spacing:-0.164px;">ALLIANCE-EXT</div>
<div style="left:213px;top:202px;width:200px;height:1px;background:#000000;"></div>
<div class="t" style="left:221.6px;top:204px;">Vente</div>
<div style="left:213px;top:218px;width:200px;height:1px;background:#000000;"></div>
<div class="t" style="left:221.6px;top:220px;letter-spacing:-0.9px;">UN</div>
<div style="left:213px;top:234px;width:200px;height:1px;background:#000000;"></div>
<div class="t" style="left:221.6px;top:236px;letter-spacing:-0.4px;">0504000010</div>
<div style="left:213px;top:250px;width:200px;height:1px;background:#000000;"></div>
<div class="t" style="left:221.6px;top:252px;letter-spacing:-0.3px;">0003</div>
<div style="left:213px;top:266px;width:200px;height:1px;background:#000000;"></div>
<div class="t" style="left:221.6px;top:268px;letter-spacing:0.2px;">TISRVCCLI3</div>
<div style="left:213px;top:282px;width:200px;height:1px;background:#000000;"></div>
<div class="t" style="left:221.6px;top:284px;">0</div>
<div style="left:213px;top:298px;width:200px;height:1px;background:#000000;"></div>
<div style="left:213px;top:299px;width:199px;height:15px;background:#c0c0c0;"></div>
<div style="left:213px;top:314px;width:200px;height:1px;background:#000000;"></div>
<div class="t" style="left:221.6px;top:316px;letter-spacing:0.087px;">PAS DE COMMENTAIRE POUR LA CO...</div>
<div style="left:213px;top:330px;width:200px;height:1px;background:#000000;"></div>
<div class="t" style="left:221.6px;top:332px;letter-spacing:-0.45px;">Solde ligne</div>
<div style="left:213px;top:346px;width:200px;height:1px;background:#000000;"></div>
<div class="t" style="left:221.6px;top:348px;">7,65</div>
<div style="left:213px;top:362px;width:200px;height:1px;background:#000000;"></div>
<div class="t" style="left:221.6px;top:364px;letter-spacing:0.18px;">CARCAR</div>
<div style="left:213px;top:378px;width:200px;height:1px;background:#000000;"></div>
<div class="t" style="left:221.6px;top:380px;letter-spacing:-0.18px;">8,5000</div>
<div style="left:213px;top:394px;width:200px;height:1px;background:#000000;"></div>
<div class="t" style="left:221.6px;top:396px;letter-spacing:-0.159px;">Client de test RVC</div>
<div style="left:213px;top:410px;width:200px;height:1px;background:#000000;"></div>
<div class="t" style="left:221.6px;top:412px;">+</div>
<div style="left:213px;top:426px;width:200px;height:1px;background:#000000;"></div>
<div class="t" style="left:221.6px;top:428px;letter-spacing:-0.158px;">PF Alliance (Configuration Externe)</div>
<div style="left:213px;top:442px;width:200px;height:1px;background:#000000;"></div>
<div class="t" style="left:221.6px;top:444px;letter-spacing:-0.3px;">19/09/2004</div>
<div style="left:213px;top:458px;width:200px;height:1px;background:#000000;"></div>
<div class="t" style="left:221.6px;top:460px;">Alain Jefourgue (fils)</div>
<div style="left:213px;top:474px;width:200px;height:1px;background:#000000;"></div>
<div style="left:213px;top:475px;width:199px;height:15px;background:#c0c0c0;"></div>
<div style="left:213px;top:490px;width:200px;height:1px;background:#000000;"></div>
<div style="left:412px;top:91px;width:1px;height:400px;background:#000000;"></div>
<div class="t" style="left:5px;top:518px;">For Help, press F1</div>
<div style="left:657px;top:517px;width:26px;height:16px;background:#ffffff;"></div>
<div style="left:657px;top:517px;width:25px;height:15px;background:#808080;"></div>
<div style="left:658px;top:518px;width:24px;height:14px;background:#d4d0c8;"></div>
<div style="left:685px;top:517px;width:28px;height:16px;background:#ffffff;"></div>
<div style="left:685px;top:517px;width:27px;height:15px;background:#808080;"></div>
<div style="left:686px;top:518px;width:26px;height:14px;background:#d4d0c8;"></div>
<div style="left:715px;top:517px;width:31px;height:16px;background:#ffffff;"></div>
<div style="left:715px;top:517px;width:30px;height:15px;background:#808080;"></div>
<div style="left:716px;top:518px;width:29px;height:14px;background:#d4d0c8;"></div>
<div class="t" style="left:686px;top:518px;letter-spacing:0.1px;">NUM</div>
<svg style="left:751px;top:520px" width="12" height="12" viewBox="0 0 12 12" shape-rendering="crispEdges"><path fill="#ffffff" d="M11 0h1v1h-1zM10 1h1v1h-1zM9 2h1v1h-1zM8 3h1v1h-1zM7 4h1v1h-1zM11 4h1v1h-1zM6 5h1v1h-1zM10 5h1v1h-1zM5 6h1v1h-1zM9 6h1v1h-1zM4 7h1v1h-1zM8 7h1v1h-1zM3 8h1v1h-1zM7 8h1v1h-1zM11 8h1v1h-1zM2 9h1v1h-1zM6 9h1v1h-1zM10 9h1v1h-1zM1 10h1v1h-1zM5 10h1v1h-1zM9 10h1v1h-1zM0 11h1v1h-1zM4 11h1v1h-1zM8 11h1v1h-1z"/><path fill="#808080" d="M11 1h1v1h-1zM10 2h2v1h-2zM9 3h2v1h-2zM8 4h2v1h-2zM7 5h2v1h-2zM11 5h1v1h-1zM6 6h2v1h-2zM10 6h2v1h-2zM5 7h2v1h-2zM9 7h2v1h-2zM4 8h2v1h-2zM8 8h2v1h-2zM3 9h2v1h-2zM7 9h2v1h-2zM11 9h1v1h-1zM2 10h2v1h-2zM6 10h2v1h-2zM10 10h2v1h-2zM1 11h2v1h-2zM5 11h2v1h-2zM9 11h2v1h-2z"/></svg>
</div></body></html>
